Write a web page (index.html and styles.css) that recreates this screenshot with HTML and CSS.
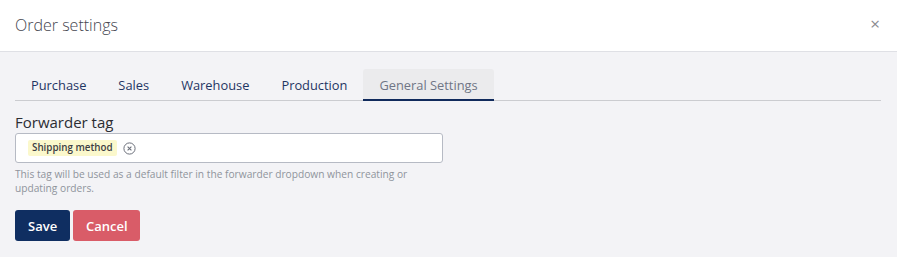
FILE: index.html
```html
<!DOCTYPE html>
<html lang="en">
<head>
    <meta charset="UTF-8">
    <meta name="viewport" content="width=device-width, initial-scale=1.0">
    <title>Order settings</title>
    <link rel="stylesheet" href="styles.css">
</head>
<body>
    <div class="modal">
        <header class="modal-header">
            <span class="modal-title">Order settings</span>
            <span class="close">&times;</span>
        </header>
        <div class="modal-body">
            <ul class="tabs">
                <li class="tab">Purchase</li>
                <li class="tab">Sales</li>
                <li class="tab">Warehouse</li>
                <li class="tab">Production</li>
                <li class="tab active">General Settings</li>
            </ul>
            <div class="field">
                <label class="field-label">Forwarder tag</label>
                <div class="tag-input">
                    <span class="tag">Shipping method</span>
                    <svg class="tag-remove" width="13" height="13" viewBox="0 0 13 13">
                        <circle cx="6.5" cy="6.5" r="5.6" fill="none" stroke="#6b6f7a" stroke-width="1"/>
                        <path d="M4.6 4.6 L8.4 8.4 M8.4 4.6 L4.6 8.4" stroke="#6b6f7a" stroke-width="1.1"/>
                    </svg>
                </div>
                <div class="help">This tag will be used as a default filter in the forwarder dropdown when creating or updating orders.</div>
            </div>
            <div class="actions">
                <button class="btn btn-save">Save</button>
                <button class="btn btn-cancel">Cancel</button>
            </div>
        </div>
    </div>
</body>
</html>
```

FILE: styles.css
```css
body {
    margin: 0;
    padding: 0;
    font-family: "Open Sans", sans-serif;
    background-color: #f3f3f6;
}
.modal-header {
    display: flex;
    justify-content: space-between;
    align-items: center;
    height: 51px;
    padding: 0 16px 0 15px;
    background-color: #fff;
    border-bottom: 1px solid #dfe0e5;
}
.modal-title {
    font-size: 16px;
    font-weight: 300;
    color: #45464f;
    margin-top: -1px;
}
.close {
    font-size: 17px;
    color: #8a8a90;
    margin-top: -4px;
    margin-right: 1px;
}
.modal-body {
    padding: 17px 16px 0 15px;
}
.tabs {
    display: flex;
    list-style: none;
    margin: 0;
    padding: 0;
    border-bottom: 1px solid #cbccd0;
}
.tab {
    padding: 0 16px;
    height: 30px;
    line-height: 32px;
    font-size: 12.85px;
    color: #1f3563;
    border-bottom: 2px solid transparent;
    margin-bottom: -1px;
}
.tab.active {
    background-color: #ebebed;
    color: #6f7585;
    border-bottom-color: #102a5c;
    border-radius: 3px 3px 0 0;
}
.field {
    margin-top: 10px;
}
.field-label {
    display: block;
    font-size: 15px;
    color: #2c2d33;
    line-height: 22px;
}
.tag-input {
    box-sizing: border-box;
    display: flex;
    align-items: center;
    gap: 6px;
    width: 428px;
    height: 30px;
    padding: 0 12px;
    background-color: #fff;
    border: 1px solid #b6bac4;
    border-radius: 3px;
}
.tag {
    font-size: 9.8px;
    font-weight: 600;
    color: #3d3e44;
    background-color: #fbf8cc;
    padding: 2px 4px;
    border-radius: 2px;
    line-height: 12px;
}
.tag-remove {
    display: block;
}
.help {
    width: 400px;
    margin-top: 4px;
    font-size: 10.2px;
    line-height: 14px;
    color: #8f939c;
}
.actions {
    display: flex;
    gap: 3px;
    margin-top: 15px;
}
.btn {
    height: 31px;
    border: none;
    border-radius: 3px;
    font-family: "Open Sans", sans-serif;
    font-size: 13px;
    font-weight: 600;
    color: #fff;
    padding: 0 13px;
}
.btn-save {
    background-color: #0f2e61;
    width: 55px;
}
.btn-cancel {
    background-color: #d95c68;
    width: 67px;
}
```
